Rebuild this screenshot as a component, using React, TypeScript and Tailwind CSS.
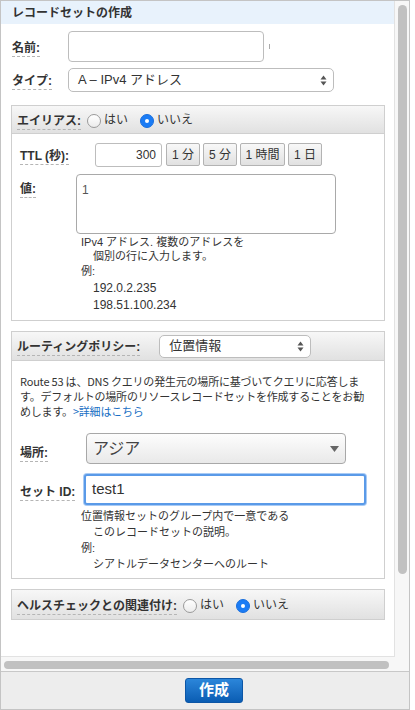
import React, { JSX } from "react";

function Label({ text, className = "" }: { text: string; className?: string }): JSX.Element {
  return (
    <div className={className}>
      <span className="font-bold text-[12px] text-[#333] border-b border-dashed border-[#b5b5b5] pb-[1px] leading-[14px]">
        {text}
      </span>
    </div>
  );
}

function Radio({ checked }: { checked?: boolean }): JSX.Element {
  return checked ? (
    <span className="w-[14px] h-[14px] shrink-0 rounded-full bg-[#1b7cf5] border border-[#1a6fdd] flex items-center justify-center">
      <span className="block w-[4px] h-[4px] rounded-full bg-white" />
    </span>
  ) : (
    <span className="block w-[14px] h-[14px] shrink-0 rounded-full bg-gradient-to-b from-white to-[#ececec] border border-[#9a9a9a]" />
  );
}

function UpDown(): JSX.Element {
  return (
    <svg width="7" height="11" viewBox="0 0 7 11">
      <path d="M3.5 0.5 L6.5 4.5 L0.5 4.5 Z" fill="#555" />
      <path d="M3.5 10.5 L6.5 6.5 L0.5 6.5 Z" fill="#555" />
    </svg>
  );
}

function SmallButton({ text, w }: { text: string; w: string }): JSX.Element {
  return (
    <button
      type="button"
      className={`${w} h-[23px] ml-[3px] text-[12px] text-[#333] border border-[#b3b3b3] rounded-[2px] bg-gradient-to-b from-[#f8f8f8] to-[#e1e1e1]`}
    >
      {text}
    </button>
  );
}

function SectionHeader({ children, h }: { children: React.ReactNode; h: string }): JSX.Element {
  return (
    <div className={`${h} flex items-center px-[5px] bg-gradient-to-b from-[#f7f7f7] to-[#e1e1e1]`}>
      {children}
    </div>
  );
}

function YesNo(): JSX.Element {
  return (
    <>
      <span className="ml-[6px] mt-[2px]"><Radio /></span>
      <span className="ml-[3px] text-[12px]">はい</span>
      <span className="ml-[12px] mt-[2px]"><Radio checked /></span>
      <span className="ml-[3px] text-[12px]">いいえ</span>
    </>
  );
}

export default function App(): JSX.Element {
  return (
    <div className="w-[415px] h-[710px] bg-white font-['Liberation_Sans','Noto_Sans_CJK_JP',sans-serif] text-[#333]">
      <div className="w-[410px] h-[710px] border border-[#c4c4c4] flex flex-col">
        {/* scroll area */}
        <div className="h-[670px] bg-[#f7f7f7] flex flex-col">
          <div className="flex h-[656px]">
            <div className="w-[394px] h-[656px] bg-white border-r border-b border-[#e2e2e2] flex flex-col">
              <div className="h-[23px] bg-[#e8f2fc] px-[11px] flex items-center font-bold text-[12px]">
                レコードセットの作成
              </div>

              <div className="px-[11px]">
                <div className="mt-[7px] h-[31px] flex items-center">
                  <Label text="名前:" className="w-[56px]" />
                  <div className="w-[196px] h-[31px] border border-[#bdbdbd] rounded-[4px] bg-white" />
                  <span className="ml-[5px] w-[1px] h-[5px] bg-[#aaa]" />
                </div>
                <div className="mt-[6px] h-[24px] flex items-center">
                  <Label text="タイプ:" className="w-[56px]" />
                  <div className="w-[266px] h-[24px] border border-[#bdbdbd] rounded-[5px] bg-white flex items-center justify-between pl-[9px] pr-[6px]">
                    <span className="text-[13px] text-[#333]">A – IPv4 アドレス</span>
                    <UpDown />
                  </div>
                </div>
              </div>

              {/* alias section */}
              <div className="mt-[13px] ml-[10px] w-[374px] border border-[#cfcfcf]">
                <div className="border-b border-[#cfcfcf]">
                  <SectionHeader h="h-[27px]">
                    <Label text="エイリアス:" />
                    <YesNo />
                  </SectionHeader>
                </div>
                <div className="px-[8px] pt-[9px] pb-[6px]">
                  <div className="h-[23px] flex items-center">
                    <Label text="TTL (秒):" className="w-[75px]" />
                    <div className="w-[67px] h-[24px] border border-[#bdbdbd] rounded-[3px] bg-white flex items-center justify-end pr-[5px] text-[12px]">
                      300
                    </div>
                    <span className="w-[1px]" />
                    <SmallButton text="1 分" w="w-[34px]" />
                    <SmallButton text="5 分" w="w-[34px]" />
                    <SmallButton text="1 時間" w="w-[45px]" />
                    <SmallButton text="1 日" w="w-[34px]" />
                  </div>
                  <div className="mt-[8px] flex">
                    <Label text="値:" className="w-[56px] pt-[2px]" />
                    <textarea
                      readOnly
                      defaultValue="1"
                      className="w-[260px] h-[60px] border border-[#a9a9a9] rounded-[4px] resize-none pl-[5px] pt-[6px] text-[12px] text-[#555] outline-none font-['Liberation_Sans',sans-serif]"
                    />
                  </div>
                  <div className="pl-[61px] text-[11px] text-[#333]">
                    <div className="leading-[14px] mt-[1px]">IPv4 アドレス. 複数のアドレスを</div>
                    <div className="leading-[14px] pl-[12px]">個別の行に入力します。</div>
                    <div className="leading-[16px]">例:</div>
                    <div className="leading-[17px] pl-[12px] mt-[1px] text-[12px]">192.0.2.235</div>
                    <div className="leading-[17px] pl-[12px] text-[12px]">198.51.100.234</div>
                  </div>
                </div>
              </div>

              {/* routing section */}
              <div className="mt-[10px] ml-[10px] w-[374px] border border-[#cfcfcf]">
                <div className="border-b border-[#cfcfcf]">
                  <SectionHeader h="h-[28px]">
                    <Label text="ルーティングポリシー:" />
                    <div className="ml-[19px] w-[152px] h-[23px] border border-[#bdbdbd] rounded-[5px] bg-white flex items-center justify-between pl-[9px] pr-[6px]">
                      <span className="text-[13px]">位置情報</span>
                      <UpDown />
                    </div>
                  </SectionHeader>
                </div>
                <div className="px-[8px] pt-[13px] pb-[6px]">
                  <p className="text-[11px] leading-[15px] font-['Noto_Sans_CJK_JP',sans-serif] tracking-[-0.2px]">
                    Route 53 は、DNS クエリの発生元の場所に基づいてクエリに応答しま
                    <br />
                    す。デフォルトの場所のリソースレコードセットを作成することをお勧
                    <br />
                    めします。<span className="text-[#1a6fc4]">&gt;詳細はこちら</span>
                  </p>
                  <div className="mt-[14px] h-[31px] flex items-center">
                    <Label text="場所:" className="w-[66px] pt-[6px]" />
                    <div className="w-[260px] h-[31px] border border-[#a8a8a8] rounded-[4px] bg-gradient-to-b from-[#fdfdfd] to-[#e9e9e9] flex items-center justify-between pl-[6px] pr-[6px]">
                      <span className="text-[16px] text-[#444]">アジア</span>
                      <svg width="9" height="6" viewBox="0 0 9 6">
                        <path d="M0 0 L9 0 L4.5 6 Z" fill="#666" />
                      </svg>
                    </div>
                  </div>
                  <div className="mt-[10px] h-[31px] flex items-center">
                    <Label text="セット ID:" className="w-[64px] pt-[2px]" />
                    <div className="w-[282px] h-[31px] border-[2px] border-[#5a9ae8] rounded-[3px] ring-1 ring-[#a9cbf5] bg-white flex items-center pl-[6px] text-[15px] text-[#333]">
                      test1
                    </div>
                  </div>
                  <div className="mt-[3px] pl-[61px] text-[11px] leading-[16px]">
                    <div>位置情報セットのグループ内で一意である</div>
                    <div className="pl-[12px]">このレコードセットの説明。</div>
                    <div>例:</div>
                    <div className="pl-[12px]">シアトルデータセンターへのルート</div>
                  </div>
                </div>
              </div>

              {/* health check */}
              <div className="mt-[10px] ml-[10px] w-[374px] border border-[#cfcfcf]">
                <SectionHeader h="h-[29px]">
                  <Label text="ヘルスチェックとの関連付け:" />
                  <YesNo />
                </SectionHeader>
              </div>
            </div>
            {/* vertical scrollbar */}
            <div className="flex-1 pl-[3px] pt-[4px]">
              <div className="w-[9px] h-[569px] rounded-full bg-[#c1c1c1]" />
            </div>
          </div>
          <div className="pl-[3px] pt-[4px]">
            <div className="w-[385px] h-[8px] rounded-full bg-[#c1c1c1]" />
          </div>
        </div>

        {/* footer */}
        <div className="h-[38px] border-t border-[#c8c8c8] bg-[#ededed] flex items-center pl-[184px]">
          <button
            type="button"
            className="w-[58px] h-[25px] rounded-[3px] border border-[#0c56a6] bg-gradient-to-b from-[#2b86da] to-[#0a5db3] text-white font-bold text-[15px]"
          >
            作成
          </button>
        </div>
      </div>
    </div>
  );
}
